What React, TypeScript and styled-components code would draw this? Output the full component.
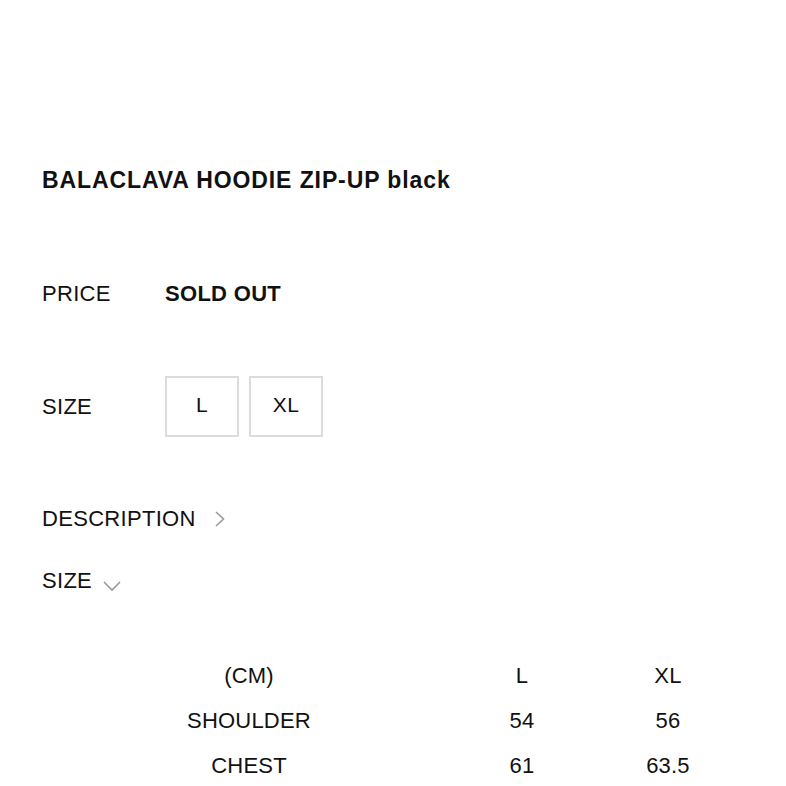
import React from 'react';
import styled, { createGlobalStyle } from 'styled-components';

const GlobalStyle = createGlobalStyle`
  html, body {
    margin: 0;
    padding: 0;
    background: #ffffff;
  }
  body {
    font-family: "Liberation Sans", Arial, sans-serif;
    color: #111111;
  }
`;

const Page = styled.div`
  width: 786px;
  height: 786px;
  overflow: hidden;
  padding: 166px 0 0 42px;
  box-sizing: border-box;
`;

const Title = styled.h1`
  margin: 0;
  font-size: 23px;
  font-weight: 700;
  letter-spacing: 0.9px;
  line-height: 28px;
`;

const InfoRow = styled.div<{ top: number }>`
  display: flex;
  align-items: center;
  margin-top: ${props => props.top}px;
`;

const Label = styled.div`
  width: 123px;
  font-size: 22px;
  letter-spacing: 0.3px;
  line-height: 28px;
`;

const Value = styled.div`
  font-size: 22px;
  font-weight: 700;
  letter-spacing: 0.3px;
  line-height: 28px;
`;

const SizeOptions = styled.div`
  display: flex;
  gap: 10px;
`;

const SizeButton = styled.div`
  width: 74px;
  height: 61px;
  box-sizing: border-box;
  border: 2px solid #dcdcdc;
  display: flex;
  align-items: center;
  justify-content: center;
  padding-bottom: 3px;
  font-size: 21px;
  letter-spacing: 0.5px;
`;

const Toggle = styled.div<{ top: number; gap: number }>`
  display: flex;
  align-items: center;
  gap: ${props => props.gap}px;
  margin-top: ${props => props.top}px;
  font-size: 22px;
  letter-spacing: 0.3px;
  line-height: 28px;
`;

const Chevron = styled.svg<{ shift?: number }>`
  display: block;
  flex-shrink: 0;
  margin-top: ${props => props.shift || 0}px;
`;

const SizeTable = styled.div`
  display: grid;
  grid-template-columns: 414px 132px 160px;
  margin-top: 67px;
  row-gap: 17px;
`;

const Cell = styled.div`
  text-align: center;
  font-size: 22px;
  letter-spacing: 0.2px;
  line-height: 28px;
`;

const rows = [
  ['(CM)', 'L', 'XL'],
  ['SHOULDER', '54', '56'],
  ['CHEST', '61', '63.5'],
];

export default function App() {
  return (
    <>
      <GlobalStyle />
      <Page>
        <Title>BALACLAVA HOODIE ZIP-UP black</Title>
        <InfoRow top={86}>
          <Label>PRICE</Label>
          <Value>SOLD OUT</Value>
        </InfoRow>
        <InfoRow top={68}>
          <Label>SIZE</Label>
          <SizeOptions>
            <SizeButton>L</SizeButton>
            <SizeButton>XL</SizeButton>
          </SizeOptions>
        </InfoRow>
        <Toggle top={68} gap={18}>
          DESCRIPTION
          <Chevron width="12" height="18" viewBox="0 0 12 18">
            <path d="M2 2 L9.5 9 L2 16" fill="none" stroke="#999" strokeWidth="1.6" />
          </Chevron>
        </Toggle>
        <Toggle top={34} gap={10}>
          SIZE
          <Chevron width="20" height="14" viewBox="0 0 20 14" shift={10}>
            <path d="M2 3 L10 11 L18 3" fill="none" stroke="#999" strokeWidth="1.6" />
          </Chevron>
        </Toggle>
        <SizeTable>
          {rows.map(row =>
            row.map((c, i) => <Cell key={row[0] + i}>{c}</Cell>)
          )}
        </SizeTable>
      </Page>
    </>
  );
}
